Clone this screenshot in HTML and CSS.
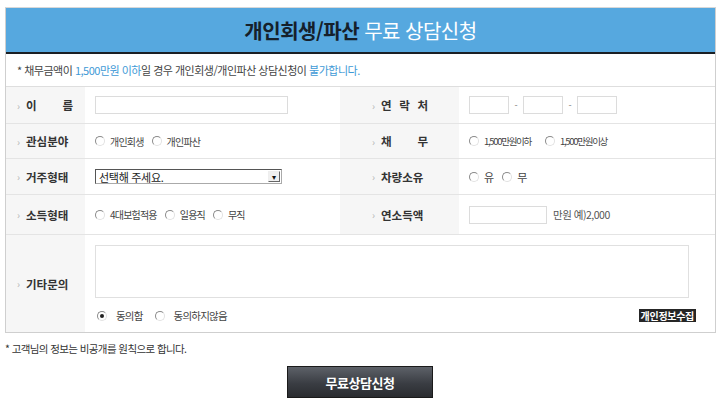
FILE: index.html
```html
<!DOCTYPE html>
<html lang="ko">
<head>
<meta charset="utf-8">
<title>개인회생/파산 무료 상담신청</title>
<link rel="stylesheet" href="styles.css">
</head>
<body>
<div class="form">
  <div class="head"><h1><b>개인회생/파산</b> 무료 상담신청</h1></div>
  <p class="notice">* 채무금액이 <span class="hl">1,500만원 이하</span>일 경우 개인회생/개인파산 상담신청이 <span class="hl">불가합니다.</span></p>

  <div class="row r1">
    <div class="lbl"><span class="ar">›</span><span class="tx">이 름</span></div>
    <div class="fld"><span class="input w-name"></span></div>
    <div class="lbl lbl2"><span class="ar">›</span><span class="tx">연 락 처</span></div>
    <div class="fld">
      <span class="input w-tel"></span><span class="dash">-</span><span class="input w-tel"></span><span class="dash">-</span><span class="input w-tel"></span>
    </div>
  </div>

  <div class="row r2">
    <div class="lbl"><span class="ar">›</span><span class="tx">관심분야</span></div>
    <div class="fld">
      <label class="opt"><span class="rd"></span>개인회생</label>
      <label class="opt"><span class="rd"></span>개인파산</label>
    </div>
    <div class="lbl lbl2"><span class="ar">›</span><span class="tx">채 무</span></div>
    <div class="fld">
      <label class="opt num"><span class="rd"></span>1,500만원이하</label>
      <label class="opt num"><span class="rd"></span>1,500만원이상</label>
    </div>
  </div>

  <div class="row r3">
    <div class="lbl"><span class="ar">›</span><span class="tx">거주형태</span></div>
    <div class="fld">
      <span class="select">선택해 주세요.<span class="sbtn">▾</span></span>
    </div>
    <div class="lbl lbl2"><span class="ar">›</span><span class="tx">차량소유</span></div>
    <div class="fld">
      <label class="opt sm"><span class="rd"></span>유</label>
      <label class="opt sm"><span class="rd"></span>무</label>
    </div>
  </div>

  <div class="row r4">
    <div class="lbl"><span class="ar">›</span><span class="tx">소득형태</span></div>
    <div class="fld">
      <label class="opt"><span class="rd"></span>4대보험적용</label>
      <label class="opt"><span class="rd"></span>일용직</label>
      <label class="opt"><span class="rd"></span>무직</label>
    </div>
    <div class="lbl lbl2"><span class="ar">›</span><span class="tx">연소득액</span></div>
    <div class="fld">
      <span class="input w-inc"></span><span class="unit">만원 예)2,000</span>
    </div>
  </div>

  <div class="row r5">
    <div class="lbl"><span class="ar">›</span><span class="tx">기타문의</span></div>
    <div class="fld wide">
      <span class="textarea"></span>
      <div class="agree">
        <label class="opt ag"><span class="rd on"></span>동의함</label>
        <label class="opt ag"><span class="rd"></span>동의하지않음</label>
        <span class="badge">개인정보수집</span>
      </div>
    </div>
  </div>
</div>

<p class="foot">* 고객님의 정보는 비공개를 원칙으로 합니다.</p>
<div class="btnwrap"><button class="btn" type="button">무료상담신청</button></div>
</body>
</html>
```

FILE: styles.css
```css
* { box-sizing: border-box; }
html, body { margin: 0; padding: 0; background: #fff; }
body {
  font-family: "Noto Sans CJK KR", "Noto Sans", sans-serif;
  color: #333;
  width: 720px;
}
.form {
  margin: 7px 0 0 5px;
  width: 711px;
  border: 1px solid #cfcfcf;
  border-top-color: #d8d8d8;
}
.head {
  height: 46px;
  background: #56a8df;
  border-bottom: 2px solid #1b1f24;
  display: flex;
  align-items: center;
  justify-content: center;
  padding-top: 1px;
}
.head h1 {
  margin: 0;
  font-size: 20px;
  font-weight: 400;
  letter-spacing: -0.5px;
  color: #fff;
  line-height: 1;
}
.head h1 b { color: #15202b; font-weight: 700; }
.notice {
  margin: 0;
  height: 33px;
  line-height: 32px;
  padding-left: 11px;
  font-size: 11px;
  letter-spacing: -0.5px;
  color: #444;
  border-bottom: 1px solid #dedede;
}
.hl { color: #3f9ad6; }

.row {
  display: grid;
  grid-template-columns: 79px 255px 119px 1fr;
  border-bottom: 1px solid #e4e4e4;
}
.r1 { height: 37px; }
.r2 { height: 35px; }
.r3 { height: 36px; }
.r4 { height: 40px; }
.r5 { height: 97px; border-bottom: 0; grid-template-columns: 79px 1fr; }

.lbl {
  background: #f6f6f6;
  display: flex;
  align-items: center;
  padding-left: 11px;
}
.lbl2 { padding-left: 32px; }
.ar {
  color: #b5b5b5;
  font-size: 10px;
  width: 9px;
}
.tx {
  display: inline-block;
  width: 47px;
  font-size: 11.5px;
  font-weight: 700;
  color: #333;
  text-align: justify;
  text-align-last: justify;
}
.fld {
  display: flex;
  align-items: center;
  padding-left: 10px;
  font-size: 10px;
  color: #444;
}
.input {
  display: inline-block;
  height: 18px;
  border: 1px solid #dcdcdc;
  background: #fff;
}
.w-name { width: 193px; }
.w-tel { width: 40px; }
.w-inc { width: 78px; }
.dash { width: 14px; text-align: center; color: #777; font-size: 9px; }
.unit { margin-left: 6px; font-size: 10.5px; letter-spacing: -0.5px; color: #555; }

.opt {
  display: inline-flex;
  align-items: center;
  margin-right: 8px;
  letter-spacing: -0.8px;
  color: #444;
}
.opt.num { letter-spacing: -1.3px; font-size: 9.5px; margin-right: 14px; }
.opt.sm { font-size: 11px; margin-right: 9px; }
.rd {
  position: relative;
  display: inline-block;
  width: 10px;
  height: 10px;
  border-radius: 50%;
  border: 1px solid;
  border-color: #8a8a8a #e2e2e2 #e2e2e2 #8a8a8a;
  margin-right: 5px;
  background: #fff;
}
.rd.on::after {
  content: "";
  position: absolute;
  left: 2px; top: 2px;
  width: 4px; height: 4px;
  border-radius: 50%;
  background: #222;
}

.select {
  position: relative;
  display: inline-flex;
  align-items: center;
  width: 187px;
  height: 15px;
  border: 1px solid;
  border-color: #555 #aaa #aaa #555;
  padding-left: 3px;
  font-size: 11px;
  color: #222;
  background: #fff;
  letter-spacing: -0.3px;
}
.sbtn {
  position: absolute;
  right: 1px; top: 1px;
  width: 12px; height: 11px;
  border: 1px solid;
  border-color: #eee #666 #666 #eee;
  background: #f0f0f0;
  font-size: 8px;
  line-height: 9px;
  text-align: center;
  color: #111;
}

.fld.wide {
  flex-direction: column;
  align-items: flex-start;
  justify-content: flex-start;
  padding-top: 10px;
}
.textarea {
  display: block;
  width: 594px;
  height: 53px;
  border: 1px solid #e0e0e0;
  background: #fff;
}
.agree {
  display: flex;
  align-items: center;
  width: 601px;
  margin-top: 10px;
  padding-left: 2px;
}
.opt.ag { font-size: 10.5px; margin-right: 12px; }
.opt.ag .rd { margin-right: 9px; }
.badge {
  margin-left: auto;
  background: #262626;
  color: #fff;
  font-size: 10px;
  font-weight: 700;
  letter-spacing: -0.3px;
  padding: 0 2px;
  height: 13px;
  line-height: 13px;
}

.foot {
  margin: 8px 0 0 5px;
  font-size: 10.5px;
  letter-spacing: -0.6px;
  color: #333;
}
.btnwrap {
  display: flex;
  justify-content: center;
  margin-top: 10px;
}
.btn {
  width: 146px;
  height: 32px;
  border: 1px solid #1a1a1a;
  background: linear-gradient(#5d6168, #3a3d43 55%, #2a2c30);
  color: #fff;
  font-family: "Noto Sans CJK KR", sans-serif;
  font-size: 13px;
  font-weight: 700;
  letter-spacing: -0.5px;
  padding: 0;
}
```
